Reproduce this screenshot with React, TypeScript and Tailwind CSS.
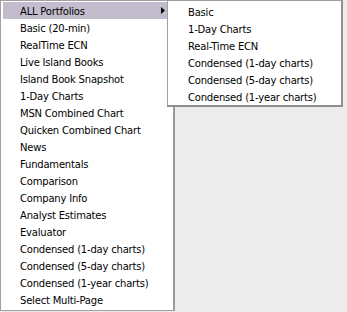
const mainItems = [
  'ALL Portfolios',
  'Basic (20-min)',
  'RealTime ECN',
  'Live Island Books',
  'Island Book Snapshot',
  '1-Day Charts',
  'MSN Combined Chart',
  'Quicken Combined Chart',
  'News',
  'Fundamentals',
  'Comparison',
  'Company Info',
  'Analyst Estimates',
  'Evaluator',
  'Condensed (1-day charts)',
  'Condensed (5-day charts)',
  'Condensed (1-year charts)',
  'Select Multi-Page',
];

const subItems = [
  'Basic',
  '1-Day Charts',
  'Real-Time ECN',
  'Condensed (1-day charts)',
  'Condensed (5-day charts)',
  'Condensed (1-year charts)',
];

export default function App() {
  return (
    <div
      className="relative h-[312px] w-[347px] overflow-hidden bg-[#ececec] text-[10px] tracking-[-0.2px] text-black"
      style={{ fontFamily: '"DejaVu Sans", Tahoma, sans-serif' }}
    >
      {/* main menu */}
      <div className="w-[175px] h-[311px] border-l border-t border-r-2 border-b border-[#a0a0a0] border-r-[#999999] bg-white pt-px">
        {mainItems.map((label, i) => (
          <div
            key={label}
            className={`mx-[2px] flex h-[17px] items-center pl-[17px] pr-2 ${i === 0 ? 'bg-[#c3bccd]' : ''}`}
          >
            <span className="flex-1 whitespace-nowrap pt-px">{label}</span>
            {i === 0 && (
              <svg width="4" height="7" viewBox="0 0 4 7" className="mr-[-2px]">
                <path d="M0 0 L4 3.5 L0 7 Z" fill="#000" />
              </svg>
            )}
          </div>
        ))}
      </div>

      {/* submenu */}
      <div className="absolute left-[167px] top-0 w-[176px] h-[107px] border-l border-t border-r-2 border-b-2 border-[#a0a0a0] border-r-[#8f8f8f] border-b-[#8f8f8f] bg-white pt-[2px]">
        {subItems.map((label) => (
          <div key={label} className="flex h-[17px] items-center pl-[20px] pt-px whitespace-nowrap">
            {label}
          </div>
        ))}
      </div>
    </div>
  );
}
